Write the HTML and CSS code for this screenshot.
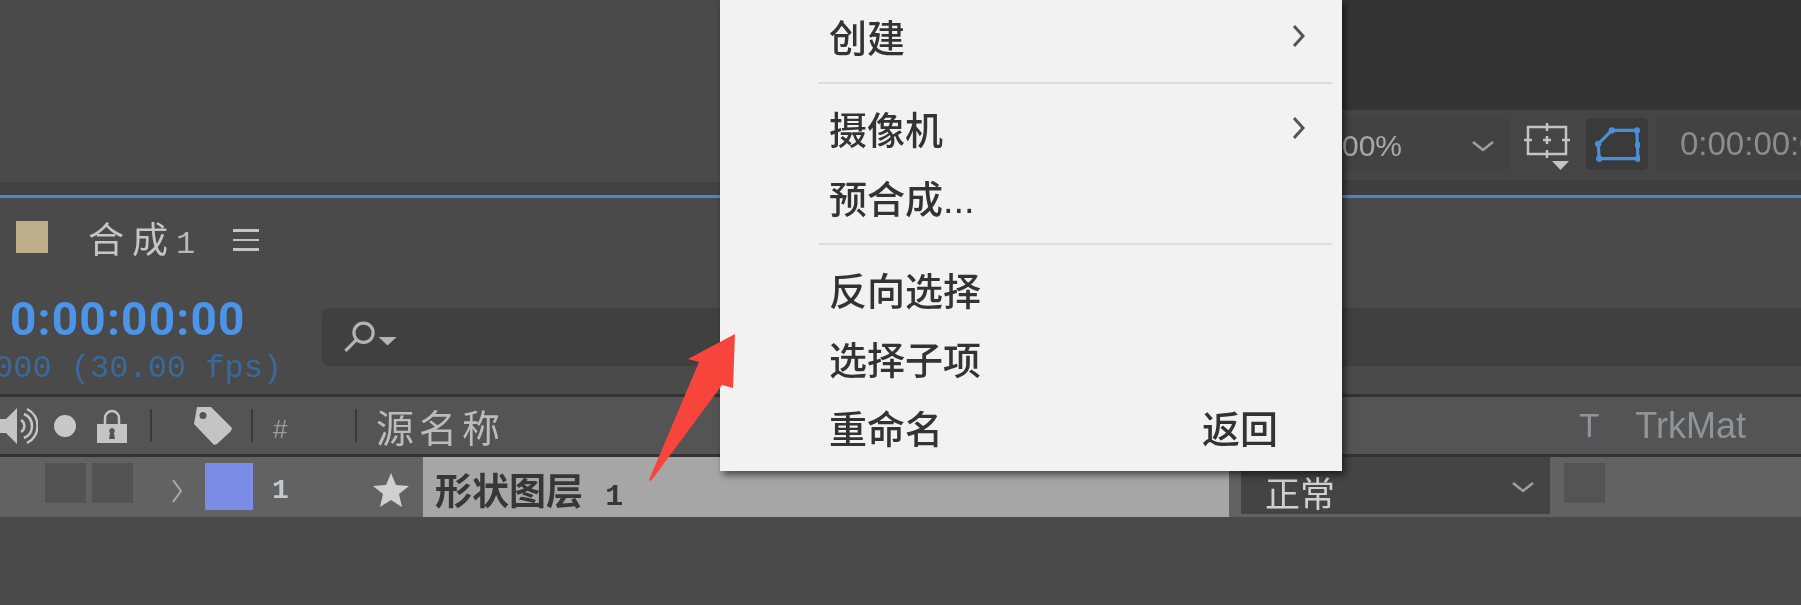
FILE: index.html
```html
<!DOCTYPE html>
<html lang="zh-CN">
<head>
    <meta charset="UTF-8">
    <title>合成 1</title>
    <link rel="stylesheet" href="styles.css">
</head>
<body>
    <div class="app">
        <div class="viewer">
            <div class="viewer-left"></div>
            <div class="viewer-right">
                <div class="viewer-stage"></div>
                <div class="toolbar">
                    <div class="zoom-select">
                        <span>100%</span>
                        <svg class="chevron-down" viewBox="0 0 24 12"><path d="M2 2l10 8 10-8"/></svg>
                    </div>
                    <svg class="grid-icon" viewBox="0 0 50 48">
                        <path class="outline" d="M5 4h38v27H5zM24 0v8M24 27v8M1 17h8M39 17h8M20 17h8M24 13v8"/>
                        <path class="fill" d="M29 38h17l-8.500 9z"/>
                    </svg>
                    <div class="mask-btn">
                        <svg viewBox="0 0 44 36">
                            <path d="M17 5h24l1 27H5L4 18z"/>
                            <circle cx="17" cy="5" r="2.500"/><circle cx="41" cy="5" r="2.500"/><circle cx="42" cy="19" r="2.500"/><circle cx="42" cy="32" r="2.500"/><circle cx="5" cy="32" r="2.500"/><circle cx="4" cy="18" r="2.500"/>
                        </svg>
                    </div>
                    <div class="time-box">0:00:00:00</div>
                </div>
                <div class="toolbar-gap"></div>
            </div>
        </div>

        <div class="comp-tab">
            <span class="comp-swatch"></span>
            <span class="comp-name">合成<span class="num">1</span></span>
            <span class="burger"><i></i><i></i><i></i></span>
        </div>

        <div class="time-row">
            <div class="time-info">
                <div class="timecode">0:00:00:00</div>
                <div class="fps">000 (30.00 fps)</div>
            </div>
            <div class="search-band">
                <svg class="search-icon" viewBox="0 0 54 30">
                    <circle cx="20" cy="11" r="9"/>
                    <path d="M13 18L3 28"/>
                    <path class="caret" d="M34 15h17l-8.500 8z"/>
                </svg>
            </div>
        </div>

        <div class="col-header">
            <svg class="ico-speaker" viewBox="0 0 38 38">
                <path class="solid" d="M0 12h6L17 1v36L6 26H0z"/>
                <path class="line" d="M21 13a7 7 0 010 12M24 7a13 13 0 010 24M27 2a19 19 0 010 34"/>
            </svg>
            <span class="ico-dot"></span>
            <svg class="ico-lock" viewBox="0 0 30 34">
                <path class="line" d="M8 15V9a7 7 0 0114 0v6"/>
                <path class="solid" fill-rule="evenodd" d="M0 15h30v19H0zM15 19a3 3 0 00-2 5l-1 6h6l-1-6a3 3 0 00-2-5z"/>
            </svg>
            <span class="sep sep-lock"></span>
            <svg class="ico-tag" viewBox="0 0 40 38">
                <path class="solid" fill-rule="evenodd" d="M4 0h14l21 21-1 3-14 13-3 1L1 17zM10 5a3.500 3.500 0 100 7 3.500 3.500 0 000-7z"/>
            </svg>
            <span class="sep sep-tag"></span>
            <span class="hash">#</span>
            <span class="sep sep-hash"></span>
            <span class="source-name">源名称</span>
            <span class="col-t">T</span>
            <span class="col-trk">TrkMat</span>
        </div>

        <div class="layer-row">
            <span class="box box-first"></span>
            <span class="box box-second"></span>
            <svg class="twirl" viewBox="0 0 12 26"><path d="M2 2l8 11-8 11"/></svg>
            <span class="layer-color"></span>
            <span class="layer-num">1</span>
            <svg class="star" viewBox="0 0 36 36"><path d="M18 1l5 12 13 1-10 8 3 13-11-7-11 7 3-13L0 14l13-1z"/></svg>
            <div class="layer-label">形状图层 <span class="num">1</span></div>
            <div class="mode-select">
                <span>正常</span>
                <svg class="chevron-down" viewBox="0 0 24 12"><path d="M2 2l10 8 10-8"/></svg>
            </div>
            <span class="box box-trk"></span>
        </div>

        <div class="timeline-empty"></div>

        <div class="context-menu">
            <div class="menu-item"><span>创建</span><svg class="sub" viewBox="0 0 14 24"><path d="M2 2l9 10-9 10"/></svg></div>
            <div class="menu-sep"></div>
            <div class="menu-item"><span>摄像机</span><svg class="sub" viewBox="0 0 14 24"><path d="M2 2l9 10-9 10"/></svg></div>
            <div class="menu-item"><span>预合成...</span></div>
            <div class="menu-sep"></div>
            <div class="menu-item"><span>反向选择</span></div>
            <div class="menu-item"><span>选择子项</span></div>
            <div class="menu-item"><span>重命名</span><span class="shortcut">返回</span></div>
        </div>

        <svg class="red-arrow" viewBox="0 0 90 150"><path d="M87 1L40 26l11 3L1 147l2 1L74 52l11 3z"/></svg>
    </div>
</body>
</html>
```

FILE: styles.css
```css
html, body {
    margin: 0;
    padding: 0;
    background-color: #4a4a4a;
}
.app {
    position: relative;
    width: 1801px;
    height: 605px;
    overflow: hidden;
    display: flex;
    flex-direction: column;
    background-color: #4a4a4a;
    color: #b8b8b8;
    font-family: "Liberation Sans", "Noto Sans CJK SC", sans-serif;
    filter: blur(0.7px);
}
.num {
    font-family: "Liberation Mono", monospace;
}

/* top area */
.viewer {
    flex: none;
    height: 195px;
    display: flex;
    border-bottom: 3px solid #4a86d0;
}
.viewer-left {
    width: 720px;
    background: linear-gradient(#4a4a4a 182px, #424242 182px);
}
.viewer-right {
    flex: 1;
    display: flex;
    flex-direction: column;
    min-width: 0;
}
.viewer-stage {
    height: 110px;
    background-color: #343434;
}
.toolbar {
    height: 70px;
    display: flex;
    align-items: center;
    background-color: #454545;
    overflow: hidden;
}
.toolbar-gap {
    flex: 1;
    background-color: #3f3f3f;
}
.zoom-select {
    flex: none;
    width: 790px;
    height: 54px;
    margin-top: -2px;
    box-sizing: border-box;
    padding-right: 15px;
    display: flex;
    align-items: center;
    justify-content: flex-end;
    background-color: #424242;
    border-radius: 6px;
    font-size: 30px;
    color: #a9a9a9;
}
.zoom-select span {
    margin: 3px 69px 0 0;
}
.chevron-down {
    width: 24px;
    height: 12px;
    margin-top: 3px;
    fill: none;
    stroke: #a0a0a0;
    stroke-width: 2.500;
}
.grid-icon {
    flex: none;
    width: 50px;
    height: 48px;
    margin: 4px 0 0 13px;
}
.grid-icon .outline {
    fill: none;
    stroke: #c4c4c4;
    stroke-width: 2.500;
}
.grid-icon .fill {
    fill: #c4c4c4;
}
.mask-btn {
    flex: none;
    width: 62px;
    height: 52px;
    margin: -2px 0 0 13px;
    display: flex;
    align-items: center;
    justify-content: center;
    background-color: #3a3a3a;
    border-radius: 5px;
}
.mask-btn svg {
    width: 46px;
    height: 38px;
    fill: #4a8fdc;
    stroke: #4a8fdc;
    stroke-width: 1;
}
.mask-btn path {
    fill: none;
    stroke-width: 3;
}
.time-box {
    flex: none;
    width: 160px;
    height: 54px;
    margin: -2px 0 0 9px;
    padding-left: 23px;
    line-height: 54px;
    background-color: #424242;
    border-radius: 6px;
    font-size: 33px;
    color: #8c8c8c;
    white-space: nowrap;
}

/* comp tab */
.comp-tab {
    flex: none;
    height: 78px;
    display: flex;
    align-items: center;
    padding-left: 16px;
}
.comp-swatch {
    width: 32px;
    height: 32px;
    background-color: #bfae8a;
}
.comp-name {
    margin-left: 40px;
    font-size: 36px;
    letter-spacing: 8px;
    color: #c6c6c6;
    white-space: nowrap;
}
.comp-name .num {
    font-size: 32px;
    letter-spacing: 0;
    margin-left: 0;
    color: #b9b9b9;
}
.burger {
    margin: 6px 0 0 38px;
    width: 26px;
    display: flex;
    flex-direction: column;
    gap: 7px;
}
.burger i {
    height: 2.500px;
    background-color: #c4c4c4;
}

/* time and search */
.time-row {
    flex: none;
    height: 118px;
    display: flex;
}
.time-info {
    flex: none;
    width: 322px;
    padding-top: 21px;
    box-sizing: border-box;
    white-space: nowrap;
}
.timecode {
    margin-left: 10px;
    height: 44px;
    line-height: 44px;
    font-family: "Roboto", sans-serif;
    font-weight: 700;
    font-size: 46px;
    letter-spacing: 1.200px;
    color: #4c94e8;
}
.fps {
    margin: 13px 0 0 -6px;
    font-family: "Liberation Mono", monospace;
    font-size: 32px;
    line-height: 30px;
    color: #3a6a9c;
}
.search-band {
    flex: 1;
    height: 58px;
    margin-top: 32px;
    display: flex;
    align-items: center;
    padding-left: 20px;
    background-color: #404040;
    border-radius: 7px 0 0 7px;
}
.search-icon {
    width: 58px;
    height: 32px;
    fill: none;
    stroke: #b4b4b4;
    stroke-width: 3;
}
.search-icon .caret {
    fill: #b4b4b4;
    stroke: none;
}

/* column header */
.col-header {
    flex: none;
    height: 57px;
    display: flex;
    align-items: center;
    background-color: #545454;
    border-top: 3px solid #333;
    border-bottom: 3px solid #333;
    color: #bbb;
}
.col-header .solid {
    fill: #c4c4c4;
}
.col-header .line {
    fill: none;
    stroke: #c4c4c4;
    stroke-width: 2.500;
}
.ico-speaker {
    flex: none;
    width: 38px;
    height: 38px;
}
.ico-dot {
    flex: none;
    width: 22px;
    height: 22px;
    margin-left: 16px;
    border-radius: 50%;
    background-color: #c8c8c8;
}
.ico-lock {
    flex: none;
    width: 30px;
    height: 34px;
    margin-left: 21px;
}
.sep {
    flex: none;
    width: 2px;
    height: 33px;
    background-color: #3a3a3a;
}
.sep-lock { margin-left: 23px; }
.ico-tag {
    flex: none;
    width: 40px;
    height: 38px;
    margin-left: 41px;
}
.sep-tag { margin-left: 18px; }
.hash {
    width: 18px;
    margin: 8px 0 0 20px;
    font-size: 26px;
    color: #9c9c9c;
}
.sep-hash { margin-left: 64px; }
.source-name {
    margin-left: 19px;
    font-size: 38px;
    letter-spacing: 5px;
    color: #bcbcbc;
}
.col-t {
    margin-left: auto;
    font-size: 33px;
    color: #8f949a;
}
.col-trk {
    margin: 0 55px 0 36px;
    font-size: 36px;
    color: #8f949a;
}

/* layer row */
.layer-row {
    flex: none;
    height: 60px;
    display: flex;
    background-color: #626262;
}
.box {
    flex: none;
    width: 41px;
    height: 40px;
    margin-top: 6px;
    background-color: #535353;
}
.box-first { margin-left: 45px; }
.box-second { margin-left: 6px; }
.twirl {
    flex: none;
    width: 12px;
    height: 26px;
    margin: 21px 0 0 38px;
    fill: none;
    stroke: #aaa;
    stroke-width: 2;
}
.layer-color {
    flex: none;
    width: 48px;
    height: 47px;
    margin: 6px 0 0 22px;
    background-color: #7b8ce6;
}
.layer-num {
    flex: none;
    width: 18px;
    margin: 16px 0 0 19px;
    font-family: "Liberation Mono", monospace;
    font-weight: 700;
    font-size: 28px;
    line-height: 36px;
    color: #c4cbcf;
}
.star {
    flex: none;
    width: 36px;
    height: 36px;
    margin: 15px 0 0 83px;
    fill: #d0d0d0;
}
.layer-label {
    flex: none;
    width: 806px;
    box-sizing: border-box;
    margin-left: 14px;
    padding: 12px 0 0 12px;
    background-color: #a6a6a6;
    font-weight: 700;
    font-size: 37px;
    line-height: 48px;
    color: #373737;
    white-space: nowrap;
}
.layer-label .num {
    font-size: 30px;
    margin-left: 12px;
}
.mode-select {
    flex: none;
    width: 309px;
    height: 57px;
    box-sizing: border-box;
    margin-left: 12px;
    padding: 0 15px 0 24px;
    display: flex;
    align-items: center;
    justify-content: space-between;
    background-color: #444;
    font-size: 35px;
    color: #d0d0d0;
}
.mode-select span {
    margin-top: 12px;
}
.box-trk {
    margin-left: 14px;
    background-color: #545454;
}
.timeline-empty {
    flex: 1;
    background-color: #4a4a4a;
}

/* context menu */
.context-menu {
    position: absolute;
    left: 720px;
    top: 0;
    width: 622px;
    height: 471px;
    box-sizing: border-box;
    padding-top: 3px;
    background-color: #f2f2f2;
    box-shadow: 3px 4px 7px rgba(0, 0, 0, 0.55);
    color: #333;
    font-size: 38px;
    font-weight: 500;
}
.menu-item {
    height: 69px;
    box-sizing: border-box;
    padding: 0 36px 4px 109px;
    display: flex;
    align-items: center;
    justify-content: space-between;
}
.menu-sep {
    height: 2px;
    margin: 10px 10px 11px 98px;
    background-color: #dcdcdc;
}
.sub {
    width: 14px;
    height: 24px;
    fill: none;
    stroke: #555;
    stroke-width: 3;
}
.shortcut {
    margin-right: 28px;
}

.red-arrow {
    position: absolute;
    left: 648px;
    top: 333px;
    width: 90px;
    height: 150px;
    fill: #f8453b;
}
```
